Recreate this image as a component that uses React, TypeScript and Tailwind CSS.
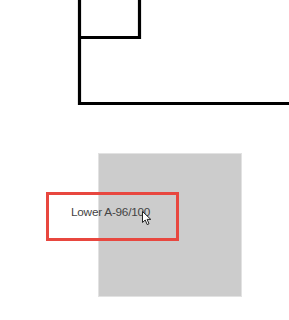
import React from 'react';

const Cursor: React.FC = () => (
  <svg width="11" height="15" viewBox="0 0 11 15" className="absolute left-[142px] top-[211px]">
    <path d="M0.5 0.5 L0.5 11.5 L3.2 9 L5.2 13.6 L7 12.8 L5.1 8.4 L8.8 8.4 Z" fill="#fff" stroke="#222" strokeWidth="1" strokeLinejoin="round" />
  </svg>
);

const App: React.FC = () => {
  return (
    <div className="relative w-[289px] h-[320px] overflow-hidden bg-white font-['Liberation_Sans',Arial,sans-serif]">
      {/* Diagram */}
      <svg width="289" height="106" viewBox="0 0 289 106" className="block">
        <path d="M79.5 -5 L79.5 103.5 L295 103.5" fill="none" stroke="#000" strokeWidth="3.2" />
        <path d="M79.5 37.5 L139.5 37.5 L139.5 -5" fill="none" stroke="#000" strokeWidth="3.2" />
      </svg>

      {/* Grey swatch */}
      <div className="ml-[98px] mt-[47px] w-[144px] h-[144px] bg-[#cccccc] border border-[#e2e2e2]" />

      {/* Hover label */}
      <div className="absolute left-[46px] top-[192px] w-[133px] h-[49px] border-[3px] border-[#e8473f] flex items-center pl-[22px] pb-[7px]">
        <span className="text-[11.8px] text-[#444] tracking-[-0.25px]">Lower A-96/100</span>
      </div>

      <Cursor />
    </div>
  );
};

export default App;
